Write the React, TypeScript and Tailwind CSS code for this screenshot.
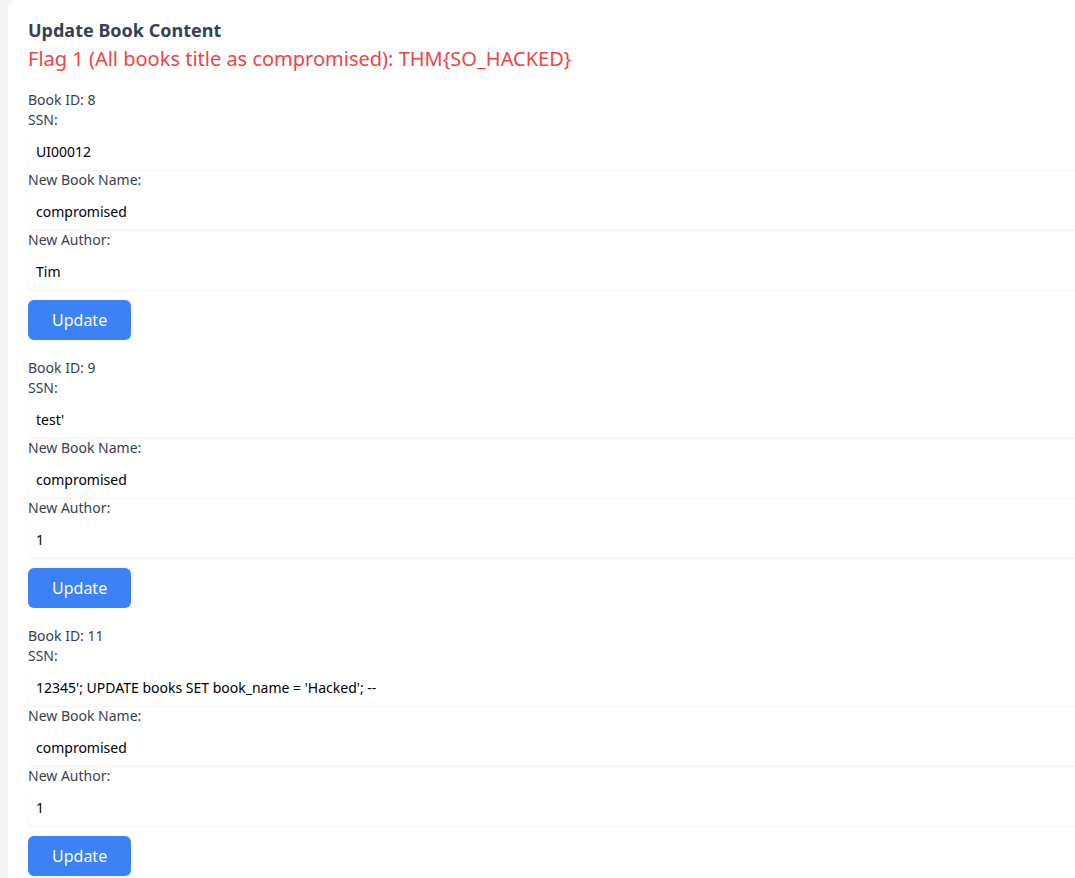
import React from "react";

const books = [
  { id: 8, ssn: "UI00012", name: "compromised", author: "Tim" },
  { id: 9, ssn: "test'", name: "compromised", author: "1" },
  { id: 11, ssn: "12345'; UPDATE books SET book_name = 'Hacked'; --", name: "compromised", author: "1" },
];

function Field({ value }: { value: string }) {
  return (
    <input
      readOnly
      value={value}
      className="block h-10 w-full rounded-md bg-white px-2 pt-[3px] text-sm text-black shadow-[0_1px_2px_rgba(0,0,0,0.06)] outline-none"
    />
  );
}

export default function App() {
  return (
    <div
      className="h-[878px] w-[1075px] overflow-hidden bg-[#f3f4f6] pl-2"
      style={{ fontFamily: '"Noto Sans", "Open Sans", sans-serif' }}
    >
      <div className="min-h-[900px] w-[1100px] rounded-tl-lg bg-white px-5 pt-4">
        <h2 className="text-lg leading-7 font-bold text-[#374151]">Update Book Content</h2>
        <p className="mt-px mb-[17px] text-xl leading-7 text-[#ef4444]">
          Flag 1 (All books title as compromised): THM{"{SO_HACKED}"}
        </p>
        {books.map((b) => (
          <div key={b.id} className="mb-[18px]">
            <div className="text-sm leading-5 text-[#374151]">Book ID: {b.id}</div>
            <label className="block text-sm leading-5 text-[#374151]">SSN:</label>
            <Field value={b.ssn} />
            <label className="block text-sm leading-5 text-[#374151]">New Book Name:</label>
            <Field value={b.name} />
            <label className="block text-sm leading-5 text-[#374151]">New Author:</label>
            <Field value={b.author} />
            <button className="mt-[10px] h-10 rounded-md bg-[#3b82f6] px-6 text-base text-white">
              Update
            </button>
          </div>
        ))}
      </div>
    </div>
  );
}
